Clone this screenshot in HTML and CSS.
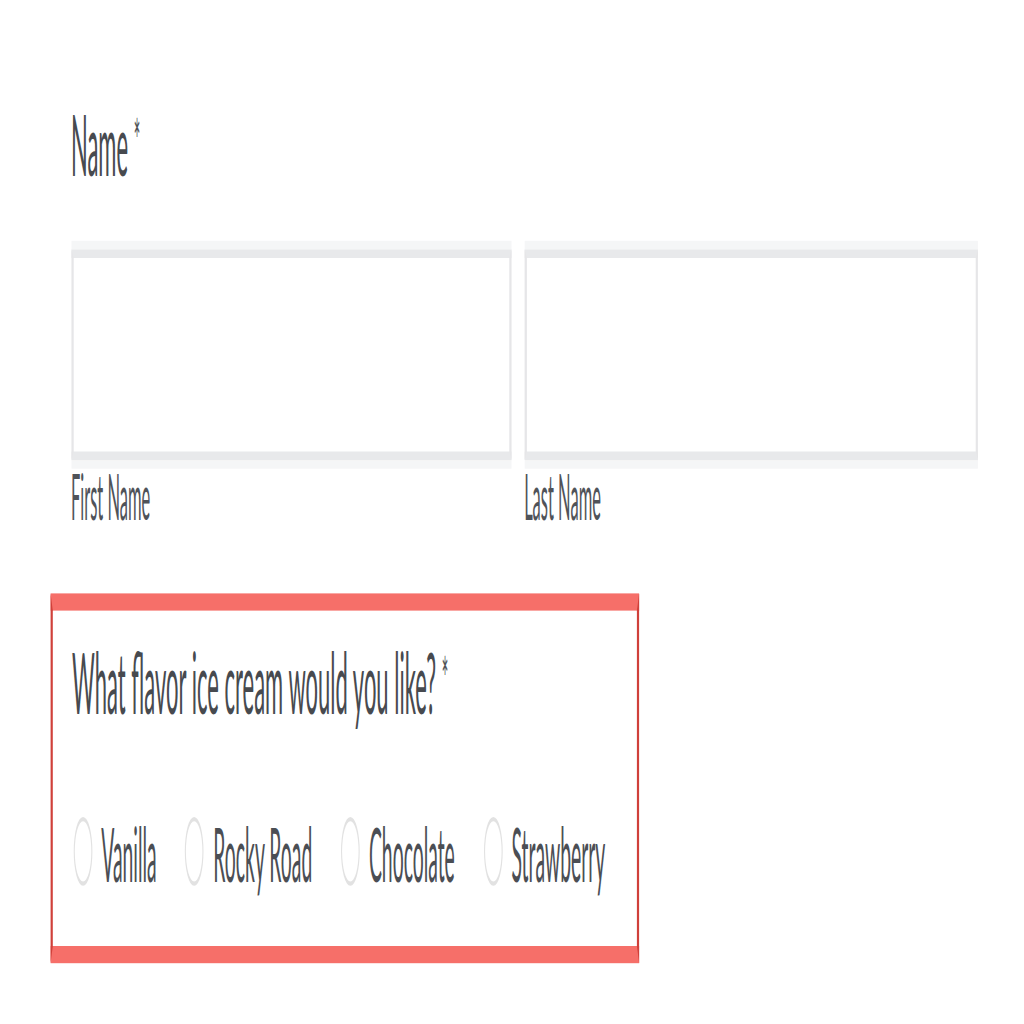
FILE: index.html
```html
<!DOCTYPE html>
<html lang="en">
<head>
<meta charset="utf-8">
<title>Form</title>
<link rel="stylesheet" href="styles.css">
</head>
<body>
<div class="frame">
<div class="page">
  <div class="field name-field">
    <div class="label-main">Name <span class="req">*</span></div>
    <div class="name-row">
      <div class="sub">
        <input class="text-input" type="text" aria-label="First Name">
        <div class="sublabel">First Name</div>
      </div>
      <div class="sub">
        <input class="text-input" type="text" aria-label="Last Name">
        <div class="sublabel">Last Name</div>
      </div>
    </div>
  </div>
  <div class="field error-field">
    <div class="label-main">What flavor ice cream would you like? <span class="req">*</span></div>
    <div class="radios">
      <label class="radio"><input type="radio" name="flavor" class="dot">Vanilla</label>
      <label class="radio"><input type="radio" name="flavor" class="dot">Rocky Road</label>
      <label class="radio"><input type="radio" name="flavor" class="dot">Chocolate</label>
      <label class="radio"><input type="radio" name="flavor" class="dot">Strawberry</label>
    </div>
  </div>
</div>
</div>
</body>
</html>
```
FILE: styles.css
```css
html, body {
  margin: 0;
  padding: 0;
  background: #ffffff;
}

.frame {
  width: 1024px;
  height: 1024px;
  overflow: hidden;
}

.page {
  width: 930px;
  height: 238px;
  box-sizing: border-box;
  padding-top: 21px;
  font-family: Lato, "Open Sans", "Liberation Sans", sans-serif;
  color: #474a4f;
  transform: scale(1.1, 4.3);
  transform-origin: 0 0;
}

.name-field {
  margin-left: 64.5px;
}

.label-main {
  font-size: 20px;
  line-height: 24px;
}

.req {
  font-size: 14px;
  vertical-align: top;
  color: #4e5055;
}

.name-row {
  display: grid;
  grid-template-columns: 400px 412px;
  column-gap: 12px;
  margin-top: 12.5px;
}

.text-input {
  display: block;
  width: 100%;
  height: 49px;
  margin: 0;
  padding: 0;
  box-sizing: border-box;
  border: 2px solid #e8e9eb;
  border-left-color: #e6e6e8;
  border-right-color: #e6e6e8;
  background: #ffffff;
  box-shadow: 0 -2px 0 #f5f6f7, 0 2px 0 #f5f6f7;
  outline: none;
  -webkit-appearance: none;
  appearance: none;
}

.sublabel {
  font-size: 15px;
  line-height: 17px;
  margin-top: 0;
  color: #505359;
}

.error-field {
  margin-left: 45.5px;
  margin-top: 14.2px;
  width: 535.5px;
  box-sizing: border-box;
  border-top: 4px solid #f66f69;
  border-bottom: 4px solid #f66f69;
  border-left: 2px solid #d0403a;
  border-right: 2px solid #d0403a;
  padding: 4.4px 18px 12px 18px;
}

.radios {
  display: flex;
  align-items: center;
  margin-top: 18.6px;
}

.radio {
  display: flex;
  align-items: center;
  flex-shrink: 0;
  white-space: nowrap;
  font-size: 17.6px;
  line-height: 19px;
  margin-right: 25px;
  color: #4b4e54;
}

.dot {
  -webkit-appearance: none;
  appearance: none;
  flex-shrink: 0;
  width: 17px;
  height: 16px;
  margin: 0 8.5px 0 1px;
  box-sizing: border-box;
  border: 1px solid #e2e2e2;
  border-radius: 50%;
  background: #fff;
}
```
